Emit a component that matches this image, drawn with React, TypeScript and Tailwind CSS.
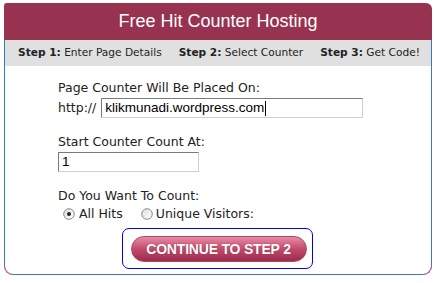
import React from "react";

function Radio({ checked }: { checked?: boolean }) {
  return (
    <svg width="12" height="12" viewBox="0 0 12 12" className="shrink-0">
      <defs>
        <linearGradient id={checked ? "rg1" : "rg2"} x1="0" y1="0" x2="1" y2="1">
          <stop offset="0" stopColor="#dcdcd7" />
          <stop offset="1" stopColor="#ffffff" />
        </linearGradient>
      </defs>
      <circle cx="6" cy="6" r="5.3" fill={`url(#${checked ? "rg1" : "rg2"})`} stroke="#8a8a8a" strokeWidth="1" />
      {checked && <circle cx="6" cy="6" r="2" fill="#222" />}
    </svg>
  );
}

export default function App() {
  return (
    <div className="w-[437px] h-[283px] bg-white overflow-hidden relative">
      <div className="ml-[4px] mt-[3px] w-[428px]">
        <div className="h-[37px] bg-[#973350] rounded-tl-[3px] rounded-tr-[6px] flex items-center justify-center text-white text-[18px] pb-[1px]" style={{ fontFamily: '"Liberation Sans", Arial, sans-serif' }}>
          Free Hit Counter Hosting
        </div>
        <div className="relative h-[235px] border-l border-r border-b border-[#3a7bb5] rounded-b-[9px]">
          <div className="h-[26px] bg-[#e0e0e0] flex items-center gap-[17px] pl-[13px] text-[10.6px] text-[#222] whitespace-nowrap" style={{ fontFamily: '"DejaVu Sans", Verdana, sans-serif' }}>
            <span><b>Step 1:</b> Enter Page Details</span>
            <span><b>Step 2:</b> Select Counter</span>
            <span><b>Step 3:</b> Get Code!</span>
          </div>
          <div className="pl-[53px] pt-[14px] text-[12.5px] text-[#222]" style={{ fontFamily: '"DejaVu Sans", Verdana, sans-serif' }}>
            <div className="leading-[16px]">Page Counter Will Be Placed On:</div>
            <div className="flex items-center mt-[2px] h-[20px]">
              <span className="mr-[5px]">http://</span>
              <div className="w-[262px] h-[20px] border border-[#7a7a7a] border-r-[#d4d0c8] border-b-[#d4d0c8] bg-white flex items-center pl-[3px] text-[13.5px] text-black" style={{ fontFamily: '"Liberation Sans", Arial, sans-serif' }}>
                klikmunadi.wordpress.com<span className="inline-block w-[1px] h-[15px] bg-black ml-[1px]"></span>
              </div>
            </div>
            <div className="leading-[16px] mt-[16px]">Start Counter Count At:</div>
            <div className="mt-[2px] w-[141px] h-[20px] border border-[#7a7a7a] border-r-[#d4d0c8] border-b-[#d4d0c8] bg-white flex items-center pl-[3px] text-[13.5px] text-black" style={{ fontFamily: '"Liberation Sans", Arial, sans-serif' }}>
              1
            </div>
            <div className="leading-[16px] mt-[16px]">Do You Want To Count:</div>
            <div className="flex items-center h-[18px] mt-[1px] pl-[5px]">
              <Radio checked />
              <span className="ml-[4px]">All Hits</span>
              <span className="ml-[18px] flex"><Radio /></span>
              <span className="ml-[3px]">Unique Visitors:</span>
            </div>
          </div>
          <div className="flex justify-center mt-[5px] pr-[2px]">
            <div className="w-[191px] h-[41px] border border-[#0000ff] rounded-[7px] flex items-center pl-[8px] pt-[1px]">
              <div className="w-[176px] h-[26px] rounded-full bg-gradient-to-b from-[#e88aa3] via-[#c24a6c] to-[#9c2c4c] border border-[#a7486a] flex items-center justify-center text-white font-bold text-[14px] tracking-[-0.2px]" style={{ fontFamily: '"Liberation Sans", Arial, sans-serif', textShadow: "0 0 1px #7a2040" }}>
                CONTINUE TO STEP 2
              </div>
            </div>
          </div>
          <div className="absolute left-[-1px] bottom-[-1px] w-[9px] h-[9px] border-l border-b border-[#e0607f] rounded-bl-[9px]"></div>
          <div className="absolute right-[-1px] bottom-[-1px] w-[9px] h-[9px] border-r border-b border-[#e0607f] rounded-br-[9px]"></div>
        </div>
      </div>
    </div>
  );
}
